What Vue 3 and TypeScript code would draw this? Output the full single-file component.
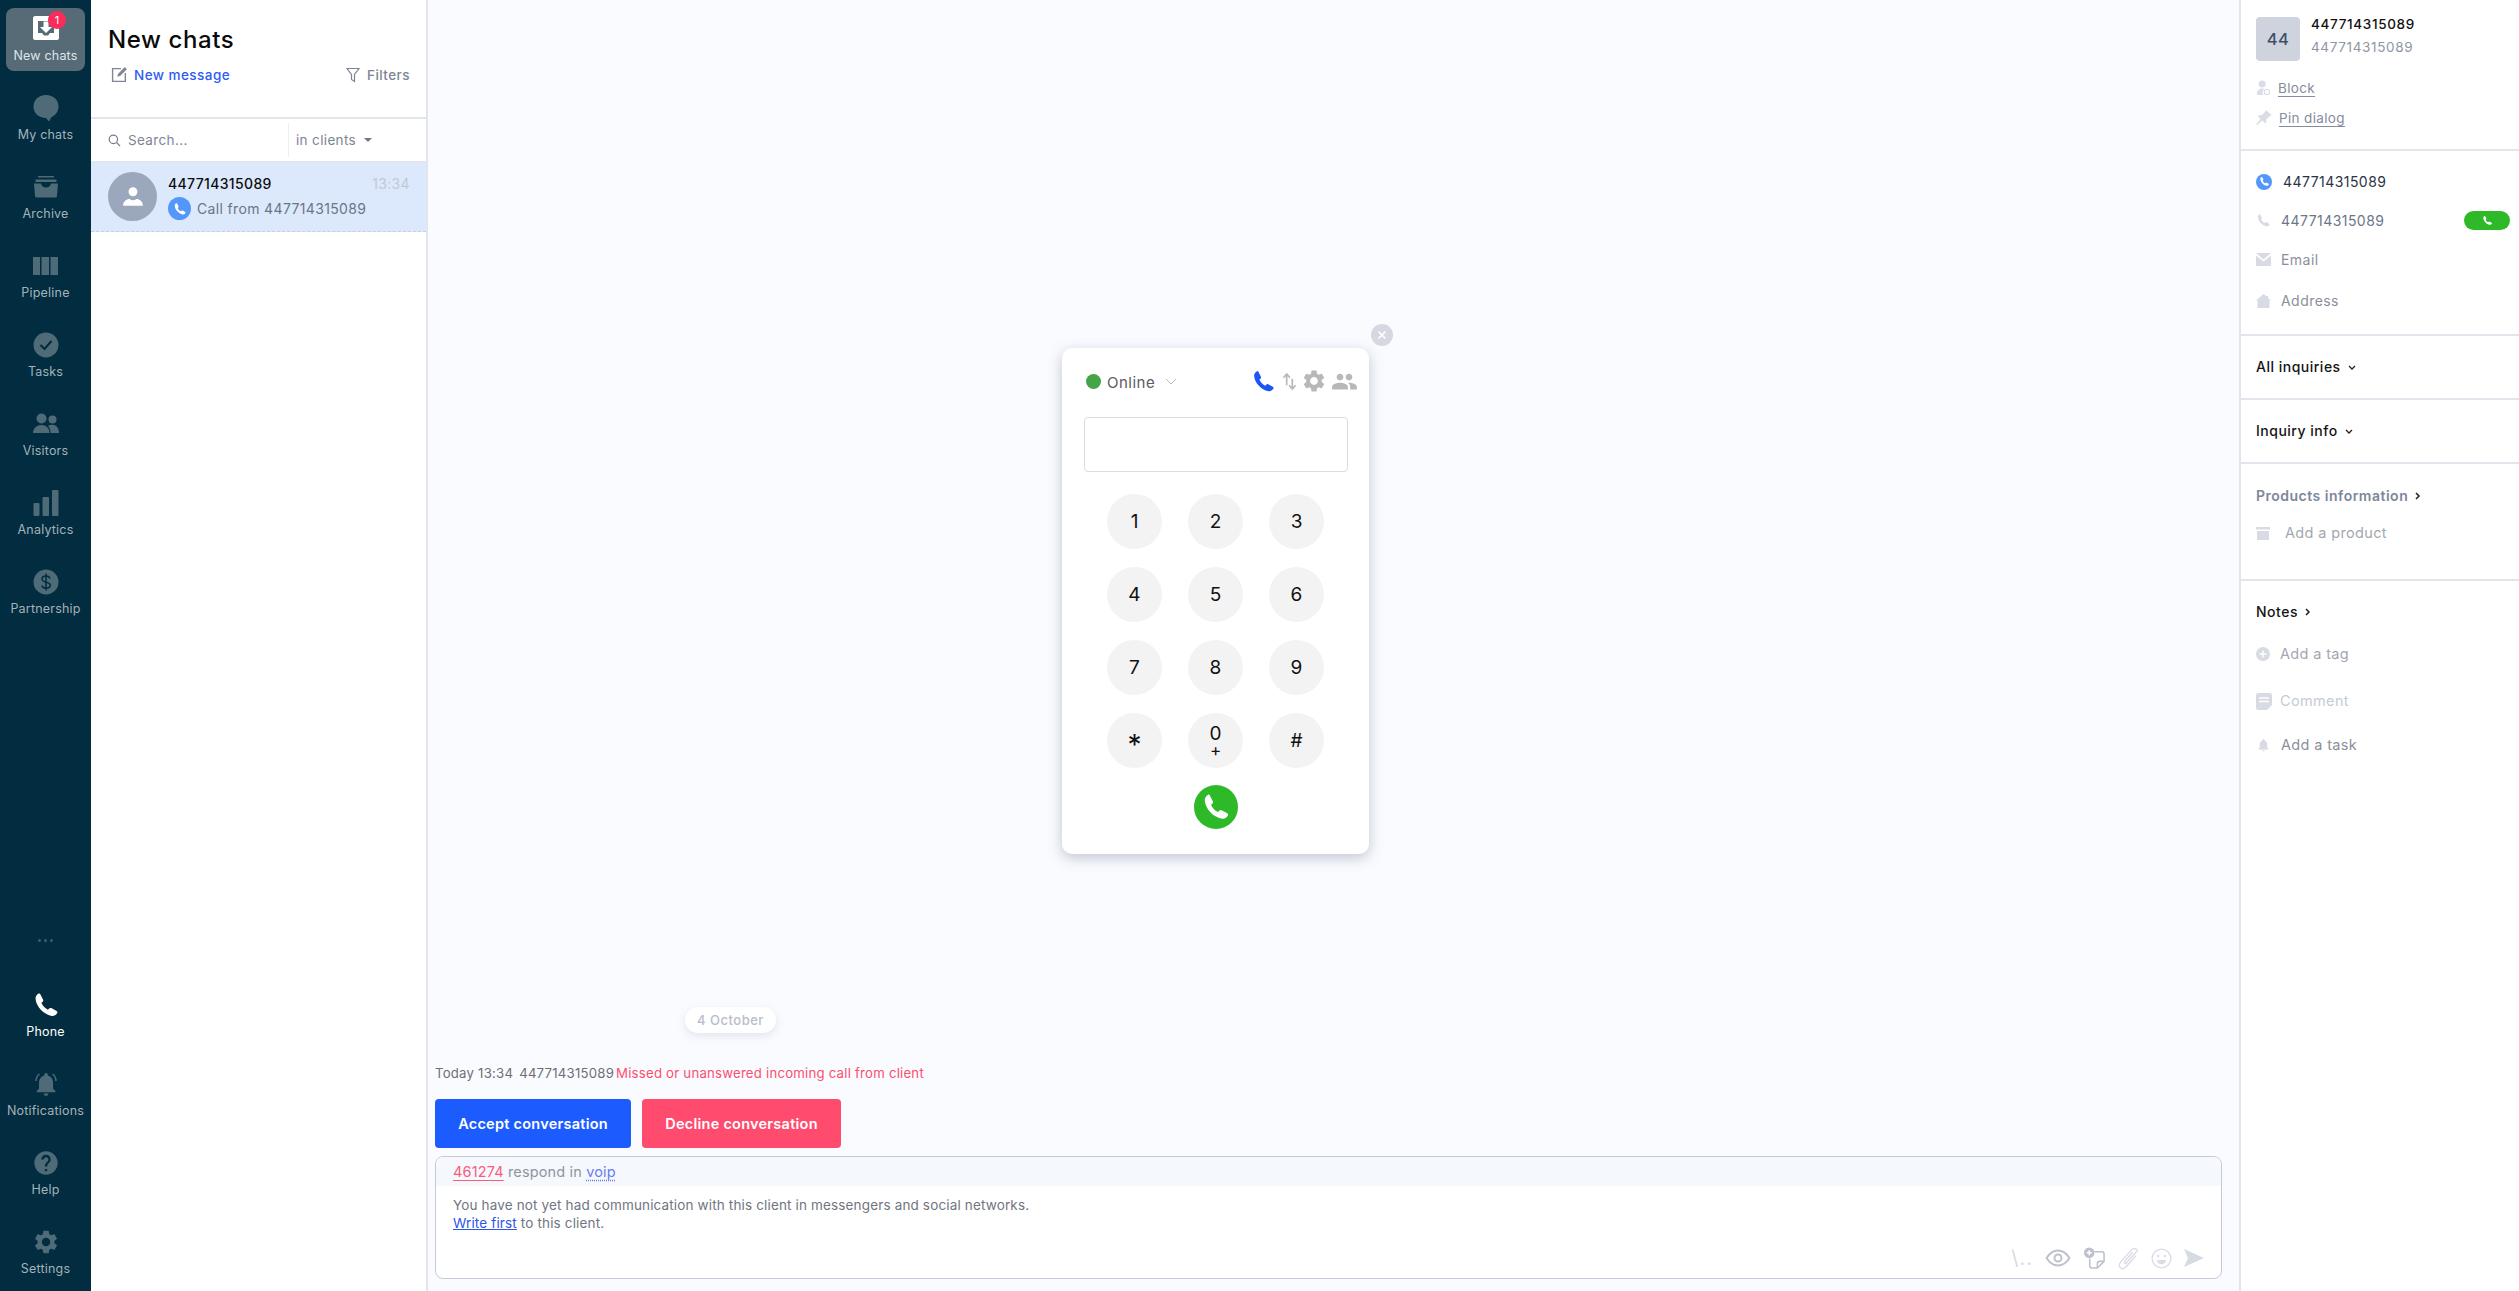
<template>
  <div class="app">
    <aside class="rail">
      <a v-for="item in topNav" :key="item.label" class="rail-item" :class="{ active: item.active }">
        <svg class="rail-icon" viewBox="0 0 28 28" v-html="item.icon"></svg>
        <span v-if="item.badge" class="badge">{{ item.badge }}</span>
        <span class="rail-label">{{ item.label }}</span>
      </a>
      <div class="rail-dots"><i></i><i></i><i></i></div>
      <a v-for="item in bottomNav" :key="item.label" class="rail-item" :class="{ lit: item.lit }">
        <svg class="rail-icon" viewBox="0 0 28 28" v-html="item.icon"></svg>
        <span class="rail-label">{{ item.label }}</span>
      </a>
    </aside>

    <section class="list">
      <header class="list-head">
        <h1>New chats</h1>
        <div class="list-actions">
          <a class="new-msg">
            <svg viewBox="0 0 16 16" width="17" height="17" fill="none" stroke="#7f8696" stroke-width="1.300">
              <path d="M9.500 2.500H1.500v12h12V6.500" />
              <path d="M6 10l.5-2.500L13 1l2 2-6.500 6.500z" fill="#7f8696" stroke="none" />
            </svg>
            New message
          </a>
          <a class="filters">
            <svg viewBox="0 0 14 16" width="14" height="16" fill="none" stroke="#7d8594" stroke-width="1.200">
              <path d="M1 1.500h12L8.500 7.500v7l-3-2v-5z" />
            </svg>
            Filters
          </a>
        </div>
      </header>
      <div class="search">
        <div class="search-field">
          <svg viewBox="0 0 14 14" width="13" height="13" fill="none" stroke="#747c8c" stroke-width="1.300">
            <circle cx="5.800" cy="5.800" r="4.500" /><path d="M9.200 9.200L13 13" />
          </svg>
          <span>Search...</span>
        </div>
        <div class="search-scope">in clients <i class="caret"></i></div>
      </div>
      <div class="chat">
        <div class="chat-avatar">
          <svg viewBox="0 0 24 24" width="28" height="28" fill="#fff">
            <circle cx="12" cy="7.500" r="3.800" />
            <path d="M3.500 19.500c0-3.800 3-5.800 5.500-5.800 1 .7 2 1 3 1s2-.3 3-1c2.500 0 5.500 2 5.500 5.800z" />
          </svg>
        </div>
        <div class="chat-body">
          <div class="chat-top">
            <b>447714315089</b>
            <span class="chat-time">13:34</span>
          </div>
          <div class="chat-sub">
            <span class="phone-dot">
              <svg viewBox="0 0 24 24" width="14" height="14" fill="#fff"><path :d="handset" /></svg>
            </span>
            Call from 447714315089
          </div>
        </div>
      </div>
    </section>

    <main class="main">
      <div class="dialer">
        <button class="dialer-close" type="button">
          <svg viewBox="0 0 10 10" width="10" height="10" stroke="#fff" stroke-width="1.600"><path d="M1.500 1.500l7 7M8.500 1.500l-7 7" /></svg>
        </button>
        <div class="dialer-top">
          <i class="online-dot"></i>
          <span class="online">Online</span>
          <svg viewBox="0 0 12 7" width="12" height="7" fill="none" stroke="#b5b8c2"><path d="M1 1l5 5 5-5" /></svg>
          <div class="dialer-tools">
            <svg viewBox="0 0 24 24" width="25" height="25" fill="#1c57f5"><path :d="handset" /></svg>
            <svg viewBox="0 0 16 20" width="15" height="19" fill="none" stroke="#b8b8b8" stroke-width="1.800">
              <path d="M5 14V3M1.500 6L5 2l3.500 4" /><path d="M11 7v11M7.500 14l3.500 4 3.500-4" />
            </svg>
            <svg viewBox="0 0 24 24" width="26" height="26" fill="#b8b8b8"><path :d="gear" /></svg>
            <svg viewBox="0 0 24 24" width="27" height="27" fill="#b8b8b8"><path :d="people" /></svg>
          </div>
        </div>
        <div class="dialer-input"></div>
        <div class="keys">
          <button v-for="k in keys" :key="k" class="key" :class="{ star: k === '*' }" type="button">
            {{ k }}
            <small v-if="k === '0'">+</small>
          </button>
        </div>
        <button class="call" type="button">
          <svg viewBox="0 0 24 24" width="30" height="30" fill="#fff"><path :d="handset" /></svg>
        </button>
      </div>

      <div class="date-pill">4 October</div>
      <div class="event">
        <span>Today 13:34</span> <span>447714315089</span>
        <em>Missed or unanswered incoming call from client</em>
      </div>
      <div class="decide">
        <button class="btn accept" type="button">Accept conversation</button>
        <button class="btn decline" type="button">Decline conversation</button>
      </div>
      <div class="composer">
        <div class="composer-head">
          <u class="who">461274</u><span class="respond"> respond in </span><u class="via">voip</u>
        </div>
        <div class="composer-body">
          <p>You have not yet had communication with this client in messengers and social networks.</p>
          <p><a>Write first</a> to this client.</p>
        </div>
        <div class="composer-tools">
          <span class="slash">\..</span>
          <svg viewBox="0 0 26 18" width="26" height="18" fill="none" stroke="#bcc1cd" stroke-width="2">
            <path d="M1.500 9C5 3.500 9 1.500 13 1.500S21 3.500 24.500 9C21 14.500 17 16.500 13 16.500S5 14.500 1.500 9z" /><circle cx="13" cy="9" r="3.500" />
          </svg>
          <svg viewBox="0 0 24 24" width="23" height="23" fill="none" stroke="#bcc1cd" stroke-width="1.600">
            <path d="M12 5h7.500c1.400 0 2.500 1.100 2.500 2.500V15l-7 7H9.500C8.100 22 7 20.900 7 19.500V12" />
            <path d="M15 22v-4.500c0-1.400 1.100-2.500 2.500-2.500H22" />
            <circle cx="6.500" cy="6" r="5.500" fill="#bcc1cd" stroke="none" />
            <path d="M6.500 3.300v5.400M3.800 6h5.400" stroke="#fff" />
          </svg>
          <svg viewBox="0 0 22 24" width="21" height="23" fill="none" stroke="#dadde5" stroke-width="1.500">
            <path d="M19.500 2.500c-1.800-1.600-4-1-5.500.7L3 15.500c-2.500 3-1.800 5.300-.3 6.400 1.700 1.200 4 .8 6-1.500L19 9" />
            <path d="M15.500 5.500L7 15c-1.200 1.400.6 3 1.800 1.700L19.500 5c1.500-1.700 1-2 0-2.500" />
          </svg>
          <svg viewBox="0 0 22 22" width="21" height="21" fill="none" stroke="#dadde5" stroke-width="1.500">
            <circle cx="11" cy="11" r="9.800" />
            <circle cx="7.500" cy="8.500" r="1.300" fill="#dadde5" stroke="none" /><circle cx="14.500" cy="8.500" r="1.300" fill="#dadde5" stroke="none" />
            <path d="M6 12.500h10c-.5 3-2.500 4.500-5 4.500s-4.500-1.500-5-4.500z" fill="#dadde5" stroke="none" />
          </svg>
          <svg viewBox="0 0 20 18" width="20" height="18" fill="#d6dae3"><path d="M0 0l20 9-20 9 4-9z" /></svg>
        </div>
      </div>
    </main>

    <aside class="info">
      <section class="info-sec sec-who">
        <div class="who-head">
          <div class="who-avatar">44</div>
          <div class="who-names">
            <b>447714315089</b>
            <span>447714315089</span>
          </div>
        </div>
        <a class="who-link">
          <svg viewBox="0 0 16 18" width="14" height="16" fill="#dadde5">
            <circle cx="7" cy="4.500" r="4" /><path d="M1 16c0-4 3-6.500 6-6.500 1 0 2 .2 2.800.7A4.500 4.500 0 0 0 8.500 17H2c-.6 0-1-.4-1-1z" /><circle cx="12.500" cy="13.500" r="3" fill="none" stroke="#dadde5" stroke-width="1.200" />
          </svg>
          <u>Block</u>
        </a>
        <a class="who-link">
          <svg viewBox="0 0 18 18" width="16" height="16" fill="#dadde5"><path d="M11 0l7 6-2.500.8-4 4 .2 3.200-1.200 1.200-3.300-3.300L1 17l-1-1 5.200-5.800-3.200-3.300 1.200-1.200 3.200.2 4-4z" /></svg>
          <u class="pin">Pin dialog</u>
        </a>
      </section>

      <section class="info-sec sec-contacts">
        <div class="contact dark">
          <span class="contact-dot"><svg viewBox="0 0 24 24" width="11" height="11" fill="#fff"><path :d="handset" /></svg></span>
          447714315089
        </div>
        <div class="contact">
          <svg viewBox="0 0 24 24" width="15" height="15" fill="#d8dbe3"><path :d="handset" /></svg>
          447714315089
          <span class="call-pill"><svg viewBox="0 0 24 24" width="11" height="11" fill="#fff"><path :d="handset" /></svg></span>
        </div>
        <div class="contact soft">
          <svg viewBox="0 0 15 13" width="15" height="13" fill="#d8dbe3"><path d="M0 0h15L7.500 6.500zM0 2.500l7.500 6 7.500-6V13H0z" /></svg>
          Email
        </div>
        <div class="contact soft address">
          <svg viewBox="0 0 15 14" width="15" height="14" fill="#d8dbe3"><path d="M7.500 0L10 2h2v2l3 2.500h-1.500V14h-12V6.500H0z" /></svg>
          Address
        </div>
      </section>

      <section class="info-sec fold">
        <h3>All inquiries <svg viewBox="0 0 8 6" width="8" height="6" fill="none" stroke="#222" stroke-width="1.300"><path d="M1 1l3 3 3-3" /></svg></h3>
      </section>
      <section class="info-sec fold">
        <h3>Inquiry info <svg viewBox="0 0 8 6" width="8" height="6" fill="none" stroke="#222" stroke-width="1.300"><path d="M1 1l3 3 3-3" /></svg></h3>
      </section>

      <section class="info-sec sec-products">
        <h3 class="muted">Products information <svg viewBox="0 0 6 8" width="6" height="8" fill="none" stroke="#222" stroke-width="1.500"><path d="M1 1l3 3-3 3" /></svg></h3>
        <div class="add-row product">
          <svg viewBox="0 0 14 13" width="14" height="13" fill="#d8dbe3"><path d="M0 0h14v2.500H0zM1 4h12v9H1z" /></svg>
          Add a product
        </div>
      </section>

      <section class="info-sec sec-notes">
        <h3>Notes <svg viewBox="0 0 6 8" width="6" height="8" fill="none" stroke="#222" stroke-width="1.500"><path d="M1 1l3 3-3 3" /></svg></h3>
        <div class="add-row tag">
          <svg viewBox="0 0 14 14" width="14" height="14"><circle cx="7" cy="7" r="7" fill="#d8dbe3" /><path d="M7 3.500v7M3.500 7h7" stroke="#fff" stroke-width="1.400" /></svg>
          Add a tag
        </div>
        <div class="add-row comment">
          <svg viewBox="0 0 16 17" width="16" height="17" fill="#d8dbe3"><path d="M2 0h12c1 0 2 1 2 2v10l-5 5H2c-1 0-2-1-2-2V2C0 1 1 0 2 0z" /><path d="M3 5h10M3 8.500h10" stroke="#fff" stroke-width="1.500" /></svg>
          <span>Comment</span>
        </div>
        <div class="add-row task">
          <svg viewBox="0 0 24 24" width="15" height="16" fill="#d8dbe3"><path :d="bell" /></svg>
          Add a task
        </div>
      </section>
    </aside>
  </div>
</template>

<script setup lang="ts">
interface NavItem {
  label: string
  icon: string
  active?: boolean
  lit?: boolean
  badge?: string
}

const handset =
  'M7 2.500L9.500 7.500C9.800 8.200 9.600 8.800 9 9.300L8 10.100C9 12.500 11 14.700 13.600 16L14.600 15C15.200 14.400 15.800 14.300 16.500 14.600L21 17C21.800 17.500 21.900 18.300 21.400 19C20.400 20.600 18.600 21.600 16.800 21.300C9.500 20 3.500 13.300 3 6.500C2.900 4.800 4 3 5.400 2.300C6 2 6.600 2 7 2.500Z'
const gear =
  'M19.140 12.940c.04-.3.06-.61.06-.94 0-.32-.02-.64-.07-.94l2.030-1.580c.18-.14.23-.41.12-.61l-1.920-3.320c-.12-.22-.37-.29-.59-.22l-2.390.96c-.5-.38-1.030-.7-1.620-.94l-.36-2.540c-.04-.24-.24-.41-.48-.41h-3.840c-.24 0-.43.17-.47.41l-.36 2.540c-.59.24-1.130.57-1.620.94l-2.390-.96c-.22-.08-.47 0-.59.22L2.740 8.870c-.12.21-.08.47.12.61l2.030 1.580c-.05.3-.09.63-.09.94s.02.64.07.94l-2.030 1.580c-.18.14-.23.41-.12.61l1.920 3.320c.12.22.37.29.59.22l2.390-.96c.5.38 1.030.7 1.620.94l.36 2.540c.05.24.24.41.48.41h3.840c.24 0 .44-.17.47-.41l.36-2.540c.59-.24 1.130-.56 1.620-.94l2.390.96c.22.08.47 0 .59-.22l1.920-3.320c.12-.22.07-.47-.12-.61l-2.010-1.580zM12 15.600c-1.980 0-3.600-1.620-3.600-3.600s1.620-3.600 3.600-3.600 3.600 1.620 3.600 3.600-1.620 3.600-3.600 3.600z'
const people =
  'M16 11c1.660 0 2.990-1.340 2.990-3S17.660 5 16 5c-1.660 0-3 1.340-3 3s1.340 3 3 3zm-8 0c1.660 0 2.990-1.340 2.990-3S9.660 5 8 5C6.340 5 5 6.340 5 8s1.340 3 3 3zm0 2c-2.330 0-7 1.170-7 3.500V19h14v-2.500c0-2.330-4.670-3.500-7-3.500zm8 0c-.29 0-.62.02-.97.05 1.160.84 1.970 1.970 1.970 3.450V19h6v-2.500c0-2.330-4.670-3.500-7-3.500z'
const bell =
  'M12 22c1.100 0 2-.9 2-2h-4c0 1.100.89 2 2 2zm6-6v-5c0-3.070-1.640-5.640-4.500-6.320V4c0-.83-.67-1.500-1.500-1.500s-1.500.67-1.500 1.500v.68C7.630 5.360 6 7.920 6 11v5l-2 2v1h16v-1l-2-2z'
const help =
  'M12 2C6.480 2 2 6.480 2 12s4.480 10 10 10 10-4.480 10-10S17.520 2 12 2zm1 17h-2v-2h2v2zm2.070-7.750l-.9.92C13.450 12.900 13 13.500 13 15h-2v-.5c0-1.100.45-2.100 1.170-2.830l1.240-1.260c.37-.36.59-.86.59-1.410 0-1.100-.9-2-2-2s-2 .9-2 2H8c0-2.210 1.790-4 4-4s4 1.790 4 4c0 .88-.36 1.680-.93 2.250z'

const C = '#4f6b78'
const BG = '#022c3f'

const topNav: NavItem[] = [
  {
    label: 'New chats',
    active: true,
    badge: '1',
    icon: `<path fill="#fff" d="M3 1h22c1 0 2 1 2 2v20c0 1-1 2-2 2H3c-1 0-2-1-2-2V3c0-1 1-2 2-2z"/><path fill="#566b76" d="M6 6h16v12h-4l-2 2.500h-4L10 18H6z"/><path fill="#fff" d="M11.500 6.500h5V12H20l-6 6-6-6h3.500z"/>`,
  },
  {
    label: 'My chats',
    icon: `<path fill="${C}" d="M14 1C6.500 1 1.500 6 1.500 12.500S6.500 24 14 24l3 3.500 2.500-4.500c4.500-2 7-6 7-10.500C26.500 6 21.500 1 14 1z"/>`,
  },
  {
    label: 'Archive',
    icon: `<path fill="${C}" d="M6 3h16v1.500H6zM3.500 6.500h21V9h-21zM2 10.500h7c.5 2.500 2.500 4 5 4s4.500-1.500 5-4h7L25 23c-.1 1-1 1.500-2 1.500H5c-1 0-1.900-.5-2-1.500z"/>`,
  },
  {
    label: 'Pipeline',
    icon: `<path fill="${C}" d="M1 1h7v18H1zM9.500 1h7.500v18H9.500zM18.500 1H26v18h-7.500z" transform="translate(0 4)"/>`,
  },
  {
    label: 'Tasks',
    icon: `<circle cx="14" cy="14" r="12.500" fill="${C}"/><path d="M8.500 14l4 4 7-8" fill="none" stroke="${BG}" stroke-width="2.200"/>`,
  },
  {
    label: 'Visitors',
    icon: `<g fill="${C}"><circle cx="9.500" cy="8.500" r="5"/><circle cx="20.500" cy="9.500" r="4"/><path d="M1 23c0-5 4-8 8.500-8s8 3 8 8z"/><path d="M18.500 23c0-3-1-5.500-2.500-7 1-.8 3-1.300 4.500-1.300 3.500 0 6.500 3 6.500 8.300z"/></g>`,
  },
  {
    label: 'Analytics',
    icon: `<g fill="${C}"><rect x="1.500" y="14" width="6" height="13" rx="1"/><rect x="10.500" y="8" width="6.500" height="19" rx="1"/><rect x="20" y="1" width="6.500" height="26" rx="1"/></g>`,
  },
  {
    label: 'Partnership',
    icon: `<circle cx="14" cy="14" r="12.500" fill="${C}"/><path d="M18 10.500c-.5-1.700-2-2.500-4-2.500-2.300 0-4 1.200-4 3 0 4.300 8.300 2 8.300 6.300 0 1.800-1.800 2.900-4.300 2.900-2 0-3.700-1-4.200-2.700M14 5.500v17" fill="none" stroke="${BG}" stroke-width="1.500"/>`,
  },
]

const bottomNav: NavItem[] = [
  {
    label: 'Phone',
    lit: true,
    icon: `<path fill="#fff" transform="scale(1.170)" d="${handset}"/>`,
  },
  {
    label: 'Notifications',
    icon: `<path fill="${C}" transform="scale(1.170)" d="${bell}"/><path d="M4 11c0-3 1.500-5.500 3.500-7M24 11c0-3-1.500-5.500-3.500-7" fill="none" stroke="${C}" stroke-width="1.500"/>`,
  },
  {
    label: 'Help',
    icon: `<path fill="${C}" transform="scale(1.170)" d="${help}"/>`,
  },
  {
    label: 'Settings',
    icon: `<path fill="${C}" transform="scale(1.170)" d="${gear}"/>`,
  },
]

const keys = ['1', '2', '3', '4', '5', '6', '7', '8', '9', '*', '0', '#']
</script>

<style>
html,
body {
  margin: 0;
  padding: 0;
  background: #fff;
}
</style>

<style scoped>
.app {
  display: flex;
  width: 2519px;
  height: 1291px;
  overflow: hidden;
  font-family: Inter, "Noto Sans", sans-serif;
  font-size: 14px;
  letter-spacing: 0.35px;
  color: #222;
}

/* left rail */
.rail {
  width: 91px;
  flex: none;
  box-sizing: border-box;
  padding: 8px 6px 7px;
  background: #022c3f;
  display: flex;
  flex-direction: column;
  gap: 16px;
}
.rail-item {
  position: relative;
  height: 63px;
  flex: none;
  box-sizing: border-box;
  padding-top: 7px;
  border-radius: 8px;
  display: flex;
  flex-direction: column;
  align-items: center;
  color: #a4b2ba;
  font-size: 12.500px;
  letter-spacing: 0.2px;
}
.rail-item.active {
  background: #566b76;
  color: #dfe5e8;
}
.rail-item.lit {
  color: #fff;
}
.rail-icon {
  width: 28px;
  height: 28px;
  flex: none;
}
.rail-label {
  margin-top: 5px;
  line-height: 16px;
  white-space: nowrap;
}
.badge {
  position: absolute;
  left: 42px;
  top: 3px;
  width: 18px;
  height: 18px;
  border-radius: 50%;
  background: #fb2c5c;
  color: #fff;
  font-size: 11px;
  line-height: 18px;
  text-align: center;
}
.rail-dots {
  margin-top: auto;
  display: flex;
  justify-content: center;
  gap: 3px;
  margin-bottom: 26px;
}
.rail-dots i {
  width: 3px;
  height: 3px;
  border-radius: 50%;
  background: #3f5d6b;
}

/* chat list */
.list {
  width: 337px;
  flex: none;
  box-sizing: border-box;
  border-right: 2px solid #e3e5ec;
  background: #fff;
}
.list-head {
  height: 119px;
  box-sizing: border-box;
  padding: 24px 16px 0 17px;
  border-bottom: 2px solid #e3e5ec;
}
.list-head h1 {
  margin: 0;
  font-size: 24px;
  line-height: 32px;
  font-weight: 500;
  letter-spacing: 0.6px;
  color: #0a0a0a;
}
.list-actions {
  margin-top: 10px;
  display: flex;
  justify-content: space-between;
  align-items: center;
  font-size: 13.500px;
  font-weight: 500;
  letter-spacing: 0.45px;
}
.new-msg {
  display: flex;
  align-items: center;
  gap: 6px;
  margin-left: 3px;
  color: #2d5cf6;
}
.filters {
  display: flex;
  align-items: center;
  gap: 7px;
  color: #7d8594;
}
.search {
  height: 44px;
  box-sizing: border-box;
  padding-top: 4px;
  border-bottom: 2px solid #e3e5ec;
  display: flex;
}
.search-field {
  width: 198px;
  box-sizing: border-box;
  padding-left: 17px;
  display: flex;
  align-items: center;
  gap: 7px;
  border-right: 1px solid #eceef2;
  color: #7d8594;
  font-size: 13.500px;
  margin-bottom: 4px;
}
.search-scope {
  padding-left: 7px;
  display: flex;
  align-items: center;
  gap: 8px;
  color: #7d8594;
  font-size: 13.500px;
  margin-bottom: 4px;
}
.caret {
  width: 0;
  height: 0;
  border: 4px solid transparent;
  border-top: 4px solid #6f7787;
  margin-top: 4px;
}
.chat {
  height: 69px;
  box-sizing: border-box;
  padding: 9px 16px 0 17px;
  display: flex;
  gap: 11px;
  background: #dce9fd;
  border-bottom: 1px dashed #c5cfe0;
}
.chat-avatar {
  width: 49px;
  height: 49px;
  flex: none;
  border-radius: 50%;
  background: #9aa7bd;
  display: flex;
  align-items: center;
  justify-content: center;
}
.chat-body {
  flex: 1;
  min-width: 0;
  padding-top: 2px;
}
.chat-top {
  display: flex;
  justify-content: space-between;
  align-items: center;
  line-height: 20px;
  font-size: 14px;
}
.chat-top b {
  font-weight: 500;
  color: #0d0d0d;
}
.chat-time {
  color: #c3c8d2;
}
.chat-sub {
  margin-top: 3px;
  display: flex;
  align-items: center;
  gap: 6px;
  color: #6c7486;
  font-size: 14px;
}
.phone-dot {
  width: 23px;
  height: 23px;
  border-radius: 50%;
  background: #5497fb;
  display: flex;
  align-items: center;
  justify-content: center;
}

/* main area */
.main {
  position: relative;
  flex: 1;
  min-width: 0;
  box-sizing: border-box;
  padding: 0 17px 12px 7px;
  background: #fafbff;
  display: flex;
  flex-direction: column;
  justify-content: flex-end;
  align-items: stretch;
}

/* floating dial pad */
.dialer {
  position: absolute;
  left: 634px;
  top: 348px;
  width: 307px;
  height: 506px;
  box-sizing: border-box;
  padding: 20px 22px 0;
  background: #fff;
  border-radius: 10px;
  box-shadow: 0 4px 14px rgba(90, 100, 125, 0.35);
}
.dialer-close {
  position: absolute;
  right: -24px;
  top: -24px;
  width: 22px;
  height: 22px;
  padding: 0;
  border: 0;
  border-radius: 50%;
  background: #d5d8e1;
  display: flex;
  align-items: center;
  justify-content: center;
}
.dialer-top {
  height: 26px;
  display: flex;
  align-items: center;
}
.online-dot {
  width: 15px;
  height: 15px;
  margin-left: 2px;
  border-radius: 50%;
  background: #43a547;
}
.online {
  margin: 3px 10px 0 6px;
  font-size: 15px;
  letter-spacing: 0.5px;
  color: #5b5a66;
}
.dialer-tools {
  margin-left: auto;
  margin-right: -11px;
  display: flex;
  align-items: center;
  gap: 4px;
}
.dialer-tools svg:first-child {
  margin-right: 2px;
}
.dialer-input {
  margin-top: 23px;
  width: 264px;
  height: 55px;
  box-sizing: border-box;
  border: 1px solid #dcdde3;
  border-radius: 4px;
}
.keys {
  margin: 22px 0 0 23px;
  display: grid;
  grid-template-columns: repeat(3, 55px);
  column-gap: 26px;
  row-gap: 18px;
}
.key {
  width: 55px;
  height: 55px;
  padding: 0;
  border: 0;
  border-radius: 50%;
  background: #f3f3f3;
  color: #111;
  font: inherit;
  font-size: 19px;
  display: flex;
  flex-direction: column;
  align-items: center;
  justify-content: center;
  line-height: 19px;
}
.key.star {
  font-size: 28px;
  padding-top: 9px;
}
.key small {
  font-size: 17px;
  line-height: 15px;
}
.call {
  display: flex;
  align-items: center;
  justify-content: center;
  width: 44px;
  height: 44px;
  margin: 17px auto 0;
  padding: 0;
  border: 0;
  border-radius: 50%;
  background: #2db928;
}

.date-pill {
  align-self: flex-start;
  margin: 0 0 31px 250px;
  width: 91px;
  height: 26px;
  border-radius: 13px;
  background: #fff;
  box-shadow: 0 3px 8px rgba(120, 130, 160, 0.18);
  color: #b8bdc9;
  font-size: 13px;
  font-weight: 500;
  letter-spacing: 0.5px;
  line-height: 26px;
  text-align: center;
}
.event {
  margin: 0 0 16px;
  font-size: 13.200px;
  line-height: 19px;
  letter-spacing: 0.22px;
  color: #6e6e78;
  white-space: nowrap;
}
.event span {
  margin-right: 2px;
}
.event em {
  font-style: normal;
  color: #fb4f6c;
}
.decide {
  display: flex;
  gap: 11px;
  margin-bottom: 8px;
}
.btn {
  height: 49px;
  border: 0;
  border-radius: 4px;
  color: #fff;
  font: inherit;
  font-size: 14.500px;
  font-weight: 600;
  letter-spacing: 0.25px;
}
.accept {
  width: 196px;
  background: #1c5cff;
}
.decline {
  width: 199px;
  background: #ff4b6e;
}
.composer {
  height: 123px;
  box-sizing: border-box;
  border: 1px solid #c6cad8;
  border-radius: 8px;
  background: #fff;
  display: flex;
  flex-direction: column;
  overflow: hidden;
}
.composer-head {
  height: 29px;
  flex: none;
  box-sizing: border-box;
  padding: 6px 17px 0;
  background: #f5f9fe;
  font-size: 14.500px;
  line-height: 18px;
  letter-spacing: 0.15px;
}
.composer-head u {
  text-underline-offset: 3px;
}
.who {
  color: #fb5b7c;
}
.respond {
  color: #8f94a1;
}
.via {
  color: #6a7bf0;
  text-decoration-style: dotted;
}
.composer-body {
  padding: 10px 17px 0;
  color: #70757f;
  font-size: 13.500px;
  line-height: 18px;
  letter-spacing: 0.15px;
}
.composer-body p {
  margin: 0;
}
.composer-body a {
  color: #2a55e8;
  text-decoration: underline;
}
.composer-tools {
  margin-top: auto;
  height: 40px;
  padding-right: 17px;
  box-sizing: border-box;
  display: flex;
  align-items: center;
  justify-content: flex-end;
  gap: 12px;
}
.slash {
  color: #d8dbe3;
  font-size: 20px;
  letter-spacing: 1px;
  line-height: 24px;
}

/* right column */
.info {
  width: 280px;
  flex: none;
  box-sizing: border-box;
  border-left: 2px solid #e3e5ec;
  background: #fff;
}
.info-sec {
  box-sizing: border-box;
  padding-left: 15px;
  border-bottom: 2px solid #e3e5ec;
}
.info-sec:last-child {
  border-bottom: 0;
}
.sec-who {
  height: 151px;
  padding-top: 17px;
}
.who-head {
  display: flex;
  gap: 11px;
  margin-bottom: 12px;
}
.who-avatar {
  width: 44px;
  height: 44px;
  border-radius: 4px;
  background: #cfd3de;
  color: #3e5266;
  font-size: 16.500px;
  font-weight: 500;
  line-height: 44px;
  text-align: center;
}
.who-names {
  display: flex;
  flex-direction: column;
  gap: 5px;
  margin-top: -2px;
  font-size: 13.500px;
  line-height: 18px;
  letter-spacing: 0.65px;
}
.who-names b {
  font-weight: 500;
  color: #111;
}
.who-names span {
  color: #8e95a4;
}
.who-link {
  height: 30px;
  display: flex;
  align-items: center;
  gap: 8px;
  font-size: 13.500px;
  color: #858ca0;
}
.who-link u {
  text-underline-offset: 3px;
}
.pin {
  margin-left: -1px;
}
.sec-contacts {
  height: 185px;
  padding: 11px 9px 0 15px;
}
.contact {
  height: 39px;
  display: flex;
  align-items: center;
  gap: 10px;
  font-size: 14px;
  letter-spacing: 0.45px;
  color: #6c7688;
}
.contact.dark {
  gap: 11px;
  color: #2a3446;
}
.contact.soft {
  color: #8b8f9b;
}
.contact.address {
  margin-top: 2px;
}
.contact-dot {
  width: 16px;
  height: 16px;
  border-radius: 50%;
  background: #5497fb;
  display: flex;
  align-items: center;
  justify-content: center;
}
.call-pill {
  margin-left: auto;
  width: 46px;
  height: 19px;
  border-radius: 10px;
  background: #2db928;
  display: flex;
  align-items: center;
  justify-content: center;
}
.fold {
  height: 64px;
  display: flex;
  align-items: center;
}
.info-sec h3 {
  margin: 0;
  font-size: 14px;
  font-weight: 500;
  line-height: 20px;
  letter-spacing: 0.5px;
  color: #141414;
}
.info-sec h3 svg {
  margin-left: 3px;
  vertical-align: 1px;
}
.info-sec h3.muted {
  color: #7d8799;
  font-weight: 600;
}
.sec-products {
  height: 117px;
  padding-top: 22px;
}
.sec-notes {
  padding-top: 21px;
}
.add-row {
  display: flex;
  align-items: center;
  gap: 10px;
  font-size: 14.500px;
  color: #a3a7b1;
  line-height: 20px;
}
.product {
  margin-top: 17px;
  gap: 15px;
}
.tag {
  margin-top: 22px;
}
.comment {
  margin-top: 27px;
  gap: 8px;
}
.comment span {
  color: #c5cbd6;
}
.task {
  margin-top: 24px;
  color: #8b8f9b;
}
</style>
